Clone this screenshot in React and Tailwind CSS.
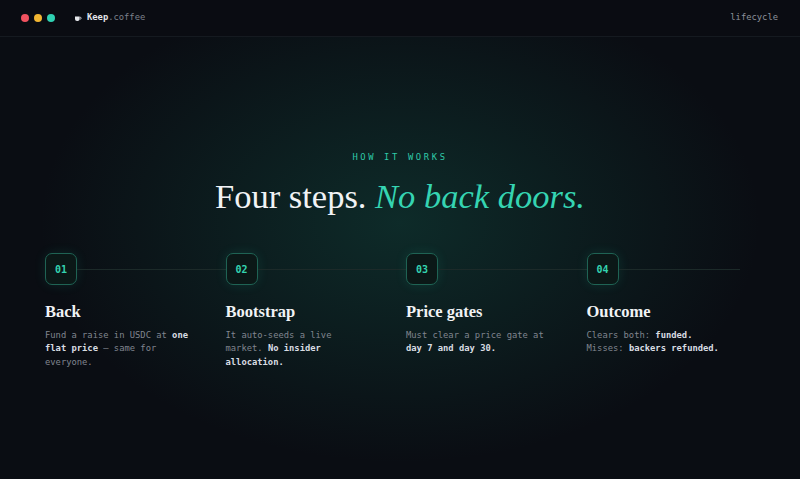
import React from "react";

const mono = "font-['DejaVu_Sans_Mono','Liberation_Mono',monospace]";
const serif = "font-['Liberation_Serif','DejaVu_Serif',serif]";

const steps = [
	{
		no: "01",
		title: "Back",
		body: (
			<>
				Fund a raise in USDC at <b className="font-bold text-[#d9dde3]">one flat price</b> — same for everyone.
			</>
		),
	},
	{
		no: "02",
		title: "Bootstrap",
		body: (
			<>
				It auto-seeds a live market. <b className="font-bold text-[#d9dde3]">No insider allocation.</b>
			</>
		),
	},
	{
		no: "03",
		title: "Price gates",
		body: (
			<>
				Must clear a price gate at <b className="font-bold text-[#d9dde3]">day 7 and day 30.</b>
			</>
		),
	},
	{
		no: "04",
		title: "Outcome",
		body: (
			<>
				Clears both: <b className="font-bold text-[#d9dde3]">funded.</b>
				<br />
				Misses: <b className="font-bold text-[#d9dde3]">backers refunded.</b>
			</>
		),
	},
];

function CupIcon() {
	return (
		<svg width="8" height="7" viewBox="0 0 8 7" className="mr-[5px]">
			<path d="M1 1.5h4.6v2.6a2 2 0 0 1-2 2H3a2 2 0 0 1-2-2z" fill="#e6e8ec" />
			<path d="M5.6 2.3h0.7a0.9 0.9 0 0 1 0 1.8h-0.7" stroke="#e6e8ec" strokeWidth="0.8" fill="none" />
		</svg>
	);
}

function Step({ step, last }) {
	return (
		<div className="flex flex-col">
			<div className="flex items-center">
				<div className={`w-8 h-8 shrink-0 rounded-[7px] border border-[#1f6354] bg-[#0b1817] shadow-[0_0_12px_rgba(45,212,176,0.12)] flex items-center justify-center text-[10px] font-bold text-[#34d3b0] ${mono}`}>
					{step.no}
				</div>
				{last ? (
					<div className="h-px w-[121px] bg-[#1c2a29]" />
				) : (
					<div className="h-px flex-1 bg-[#1c2a29]" />
				)}
			</div>
			<div className={`mt-[16px] text-[16.5px] leading-[22px] font-bold text-[#f1f3f5] ${serif}`}>{step.title}</div>
			<p className={`mt-[6px] max-w-[146px] text-[8.8px] leading-[13.3px] text-[#80858f] ${mono}`}>{step.body}</p>
		</div>
	);
}

export default function App() {
	return (
		<div className="w-[800px] h-[479px] overflow-hidden bg-[#0a0d13] flex flex-col">
			<div className="h-[37px] shrink-0 flex items-center justify-between pl-[21px] pr-[22px] border-b border-[#151a20] bg-[#0a0c12]">
				<div className="flex items-center">
					<span className="w-2 h-2 rounded-full bg-[#f0525f]" />
					<span className="w-2 h-2 rounded-full bg-[#f2b632] ml-[5px]" />
					<span className="w-2 h-2 rounded-full bg-[#2fd1b2] ml-[5px]" />
					<span className="ml-[19px] flex items-center">
						<CupIcon />
						<span className={`text-[8.8px] ${mono} font-bold text-[#e3e6ea]`}>Keep</span>
						<span className={`text-[8.8px] ${mono} text-[#7c818b]`}>.coffee</span>
					</span>
				</div>
				<span className={`text-[8.8px] ${mono} text-[#8d929b]`}>lifecycle</span>
			</div>

			<div className="flex-1 flex flex-col bg-[radial-gradient(ellipse_360px_240px_at_50%_42%,rgba(20,96,80,0.36),rgba(10,13,19,0)_100%)]">
				<div className={`mt-[114px] text-center text-[8.8px] tracking-[0.3em] text-[#2fc9a8] ${mono}`}>HOW IT WORKS</div>
				<h1 className={`mt-[12px] text-center text-[34.5px] leading-[40px] text-[#f1f3f5] ${serif}`}>
					Four steps. <em className="italic text-[#35d4b2]">No back doors.</em>
				</h1>
				<div className="mt-[37px] ml-[45px] w-[722px] grid grid-cols-4">
					{steps.map((s, i) => (
						<Step key={s.no} step={s} last={i === steps.length - 1} />
					))}
				</div>
			</div>
		</div>
	);
}
